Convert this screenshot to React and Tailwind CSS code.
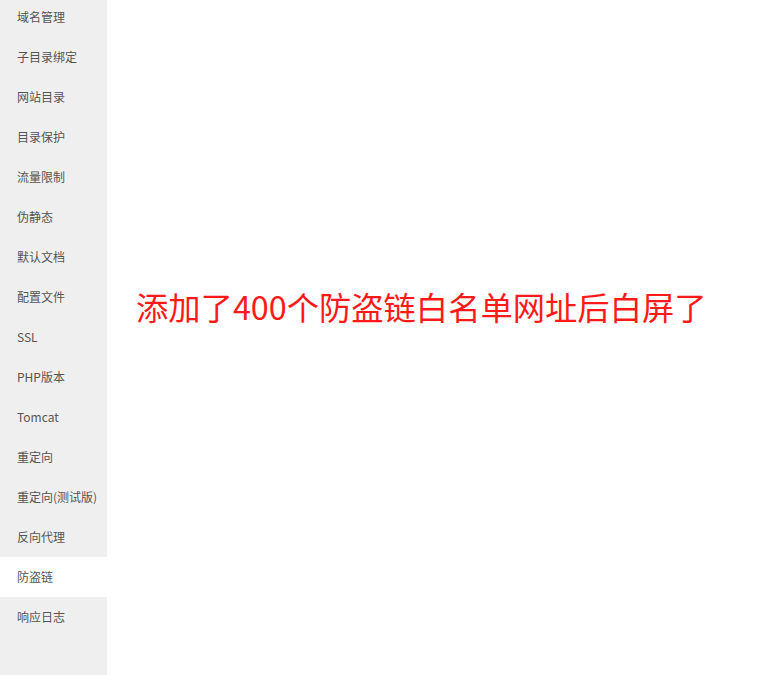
const menu = [
  '域名管理',
  '子目录绑定',
  '网站目录',
  '目录保护',
  '流量限制',
  '伪静态',
  '默认文档',
  '配置文件',
  'SSL',
  'PHP版本',
  'Tomcat',
  '重定向',
  '重定向(测试版)',
  '反向代理',
  '防盗链',
  '响应日志',
];

export default function App() {
  const active = '防盗链';

  return (
    <div className="flex h-[675px] w-[770px] overflow-hidden bg-white font-['Noto_Sans_CJK_SC','Noto_Sans',sans-serif]">
      {/* Side menu */}
      <div className="w-[107px] shrink-0 bg-[#efefef]">
        <ul className="-mt-[3px]">
          {menu.map((item) => (
            <li
              key={item}
              className={`flex h-10 items-center pl-[17px] text-xs text-[#555] ${item === active ? 'bg-white' : ''}`}
            >
              {item}
            </li>
          ))}
        </ul>
      </div>

      {/* Content */}
      <div className="flex-1 pl-[29px] pt-[282px]">
        <p className="text-[32.3px] leading-[48px] text-[#ff1a1a]">添加了400个防盗链白名单网址后白屏了</p>
      </div>
    </div>
  );
}
